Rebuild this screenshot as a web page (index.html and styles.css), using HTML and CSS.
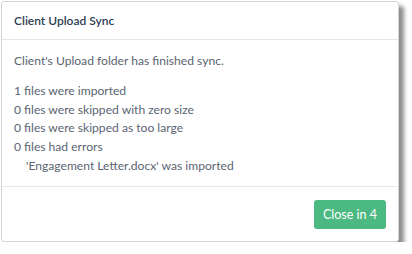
FILE: index.html
```html
<!DOCTYPE html>
<html lang="en">
<head>
  <meta charset="UTF-8" />
  <meta name="viewport" content="width=device-width, initial-scale=1" />
  <title>Client Upload Sync</title>
  <link rel="stylesheet" href="styles.css">
</head>
<body>
  <div class="modal">
    <header class="modal-header">
      <h4>Client Upload Sync</h4>
    </header>

    <section class="modal-body">
      <p>Client's Upload folder has finished sync.</p>
      <ul class="sync-log">
        <li>1 files were imported</li>
        <li>0 files were skipped with zero size</li>
        <li>0 files were skipped as too large</li>
        <li>0 files had errors</li>
        <li class="file">'Engagement Letter.docx' was imported</li>
      </ul>
    </section>

    <footer class="modal-footer">
      <button class="btn-close">Close in 4</button>
    </footer>
  </div>
</body>
</html>
```

FILE: styles.css
```css
* {
  margin: 0;
  padding: 0;
  box-sizing: border-box;
}

html, body {
  background-color: #ffffff;
  font-family: Lato, 'Open Sans', sans-serif;
  color: #5a6472;
}

body {
  padding: 1px 0 0 1px;
}

.modal {
  width: 398px;
  height: 241px;
  background: #ffffff;
  border: 1px solid #d4d4d4;
  border-radius: 3px;
  box-shadow: 5px 5px 4px rgba(0, 0, 0, 0.45);
  display: flex;
  flex-direction: column;
}

.modal-header {
  height: 38px;
  padding: 0 12px;
  display: flex;
  align-items: center;
  border-bottom: 1px solid #e6e6e6;
}

.modal-header h4 {
  font-size: 12px;
  font-weight: 600;
  color: #2c3e50;
}

.modal-body {
  flex: 1;
  padding: 12px 12px 10px;
  font-size: 12.1px;
  line-height: 18.75px;
}

.modal-body p {
  margin-bottom: 11px;
}

.sync-log {
  list-style: none;
}

.sync-log .file {
  padding-left: 12px;
}

.modal-footer {
  height: 55px;
  padding: 0 12px;
  display: flex;
  align-items: center;
  justify-content: flex-end;
  border-top: 1px solid #e6e6e6;
}

.btn-close {
  height: 29px;
  padding: 0 9px;
  background-color: #4cb882;
  color: #ffffff;
  border: none;
  border-radius: 3px;
  font-family: Lato, 'Open Sans', sans-serif;
  font-size: 12.5px;
  cursor: pointer;
}
```
